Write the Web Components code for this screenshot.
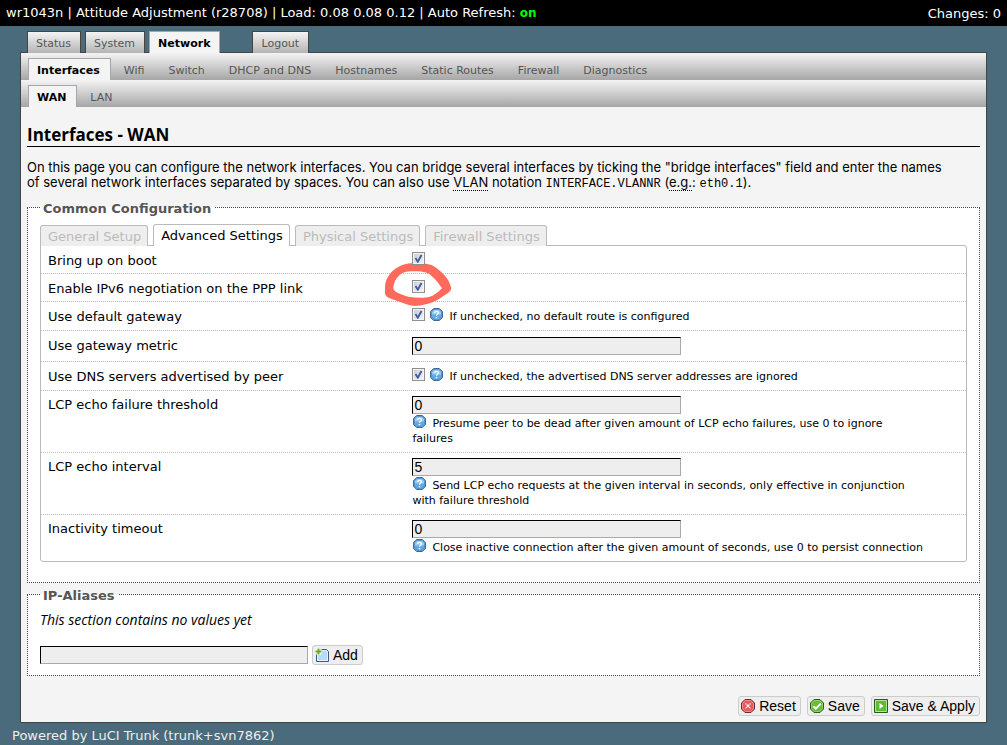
<!DOCTYPE html>
<html lang="en">
<head>
<meta charset="utf-8">
<title>wr1043n - LuCI</title>
<style>
  body { margin: 0; background: #4a6b7c; color: #000; font: 13px/15px "DejaVu Sans", Verdana, sans-serif; }
</style>
</head>
<body>
<luci-app></luci-app>

<script>
const ICONS = {
  help: '<path d="M4 .5h6L13.500 4v6L10 13.500H4L.5 10V4z" fill="#62a9e4" stroke="#35587f"/><path d="M4.400 1.500h5.200l2.900 2.900V7h-11V4.400z" fill="#9accf2"/><path d="M4.400 1.500h5.200l2.900 2.900v5.200l-2.900 2.900H4.400L1.500 9.600V4.400z" fill="none" stroke="#4d92d2"/><path d="M5 5.400C5 3 9.100 3 9.100 5.200c0 1.500-2.100 1.400-2.100 3.100" fill="none" stroke="#fff" stroke-width="1.400"/><path d="M6.200 9.600h1.600v1.500H6.200z" fill="#fff"/>',
  reset: '<path d="M4 .5h6L13.500 4v6L10 13.500H4L.5 10V4z" fill="#e35b5f" stroke="#742a2c"/><path d="M4.400 1.500h5.200l2.900 2.900v5.200l-2.900 2.900H4.400L1.500 9.600V4.400z" fill="none" stroke="#f08b8d"/><path d="M4.500 4.500l5 5m0-5l-5 5" stroke="#fff" stroke-width="1.300" stroke-dasharray="1.200 .5"/>',
  save: '<path d="M4 .5h6L13.500 4v6L10 13.500H4L.5 10V4z" fill="#68bc38" stroke="#2f5b1c"/><path d="M4.400 1.500h5.200l2.900 2.900v5.200l-2.900 2.900H4.400L1.500 9.600V4.400z" fill="none" stroke="#93d467"/><path d="M3.500 7.200l2.400 2.400 4.900-5" fill="none" stroke="#fff" stroke-width="2"/>',
  apply: '<path d="M.5.5h13v13H.5z" fill="#5fbb35" stroke="#255e16"/><path d="M1.500 1.500h11v11h-11z" fill="none" stroke="#b5e598"/><path d="M5.500 4l4 3-4 3z" fill="#fff"/>',
  add: '<path d="M2 1.500h9.500l2 2v10H1.500V2z" fill="#b7dcfb" stroke="#3d5a83"/><path d="M2.500 2.500H11l1.500 1.500v8.500h-10z" fill="none" stroke="#e3f3ff"/><path d="M3.500 0v7M0 3.500h7" stroke="#fff" stroke-width="4"/><path d="M3.500 .5v6M.5 3.500h6" stroke="#69a823" stroke-width="2"/>'
};
const icon = (name, size = 14) => `<svg class="icon" width="${size}" height="${size}" viewBox="0 0 14 14" aria-hidden="true">${ICONS[name]}</svg>`;

const define = (name, render) => customElements.define(name, class extends HTMLElement {
  connectedCallback() {
    if (this.shadowRoot) return;
    this.attachShadow({ mode: 'open' }).innerHTML = render(this);
  }
});

define('status-bar', () => `
  <style>
    :host { display: flex; justify-content: space-between; align-items: center; height: 26px; padding: 0 6px; background: #000; color: #fff; }
  </style>
  <slot></slot><slot name="end"></slot>`);

/* A row of navigation tabs; level "main" sits on the blue page, "sub" is a grey bar. */
define('nav-tabs', el => {
  const active = el.getAttribute('active');
  const links = el.getAttribute('items').split(',').map(t =>
    `<a href="#"${t === active ? ' class="on" aria-current="page"' : ''}${t === 'Logout' ? ' style="margin-left:28px"' : ''}>${t}</a>`).join('');
  return `
  <style>
    :host { display: block; font-size: 11px; }
    nav { display: flex; align-items: flex-end; gap: 4px; }
    a { box-sizing: border-box; height: 22px; padding: 0 10px 0 8px; border: 1px solid transparent; border-bottom: 0; line-height: 23px; color: #555; text-decoration: none; }
    .on { font-weight: bold; color: #000; }
    :host([level=main]) nav { position: relative; z-index: 1; padding: 5px 7px 0; margin-bottom: -1px; }
    :host([level=main]) a { padding: 0 9px 0 8px; border-color: #444; background: linear-gradient(#f4f4f4, #b4b4b4); }
    :host([level=sub]) nav { height: 27px; padding: 0 7px; background: linear-gradient(#f4f4f4, #a6a6a6); }
    nav a.on { border-color: #a6a6a6 !important; background: #f4f4f4 !important; }
  </style>
  <nav>${links}</nav>`;
});

define('config-section', el => `
  <style>
    :host { display: block; }
    fieldset { margin: 0; padding: 0 12px; min-width: 0; border: 1px dotted #444; background: #fff; }
    legend { padding: 3px 3px 0; font-weight: bold; color: #555; }
  </style>
  <fieldset><legend>${el.getAttribute('heading')}</legend><slot></slot></fieldset>`);

define('form-tabs', el => {
  const active = el.getAttribute('active');
  return `
  <style>
    :host { display: block; padding: 8px 0 20px; }
    .tabs { position: relative; display: flex; align-items: flex-end; gap: 5px; margin-bottom: -1px; }
    button { height: 21px; margin: 0; padding: 1px 6px 0 7px; border: 1px solid #bbb; border-bottom: 0; border-radius: 3px 3px 0 0; background: #eee; color: #bbb; font: inherit; line-height: 20px; }
    button.on { height: 22px; background: #fff; color: #000; }
    .pane { border: 1px solid #bbb; border-radius: 0 3px 3px 3px; }
  </style>
  <div class="tabs" role="tablist">${el.getAttribute('items').split(',').map(t =>
    `<button type="button" role="tab" aria-selected="${t === active}"${t === active ? ' class="on"' : ''}>${t}</button>`).join('')}</div>
  <div class="pane"><slot></slot></div>`;
});

/* One option: label on the left, tick box or text box on the right, with an optional hint. */
define('config-row', el => {
  const isText = el.hasAttribute('value');
  const hint = el.getAttribute('hint');
  return `
  <style>
    :host { display: flex; padding: 6px 7px; border-bottom: 1px dotted #bbb; }
    :host([value][hint]) { padding-top: 5px; }
    :host(:last-of-type) { border-bottom: 0; }
    label { flex: 0 0 40%; padding-top: 1px; margin-bottom: -1px; }
    .field { flex: 0 1 512px; min-width: 0; }
    .check { display: flex; gap: 4px; }
    .box { position: relative; display: flex; }
    input[type=checkbox] {
      appearance: none; position: relative; z-index: 2; width: 13px; height: 13px; margin: 0;
      border: 1px solid #8e8f8f; box-shadow: inset 0 0 0 1px #f4f4f4;
      background: url("data:image/svg+xml,%3Csvg xmlns='http://www.w3.org/2000/svg' viewBox='0 0 11 11'%3E%3Cpath d='M2.500 5l2.300 3.700L8.500 2' fill='none' stroke='%23445aa0' stroke-width='1.900'/%3E%3C/svg%3E") center / 11px 11px, linear-gradient(135deg, #c9cdd4, #f4f5f6);
    }
    input[type=text] { display: block; box-sizing: border-box; width: 269px; max-width: 100%; height: 18px; padding: 0 1px; border: 1px solid; border-color: #000 #aaa #aaa #000; background: #eee; color: #000; font: 14px "Liberation Sans", Arial, sans-serif; }
    .hint { font-size: 11px; }
    input + .hint { margin-top: 1px; }
    .icon { vertical-align: -1px; margin: 0 6px 0 1px; }
    .mark { position: absolute; left: -27px; top: -17px; z-index: 1; pointer-events: none; }
  </style>
  <label for="f">${el.getAttribute('label')}</label>
  <div class="field${isText ? '' : ' check'}">
    ${isText ? `<input id="f" type="text" value="${el.getAttribute('value')}">`
      : `<span class="box"><input id="f" type="checkbox" checked>${el.hasAttribute('marked') ? `
        <svg class="mark" width="67" height="43" viewBox="0 0 201 129" aria-hidden="true"><path fill="#ff6a5c" fill-rule="evenodd" d="M0 72C1 52 10 37 22 25 40 8 60 0 91 0c28 0 47 3 59 12 20 14 36 31 42 44l7 19c-2 12-14 18-25 25-16 12-39 26-85 29-20-1-38-10-58-17C12 106 3 101 0 93zM25 75c1 14 25 20 49 27 20 3 45 3 58 0 15-4 24-12 39-26-8-12-16-24-29-35-11-12-25-16-50-16-27-1-40 3-51 14-10 10-15 21-16 36z"/></svg>` : ''}</span>`}
    ${hint ? `<div class="hint">${icon('help', 13)}${hint}</div>` : ''}
  </div>`;
});

define('icon-button', el => `
  <style>
    :host { display: inline-flex; }
    button { display: flex; align-items: center; gap: 4px; box-sizing: border-box; height: 20px; margin: 0; padding: 0 4px 0 2px; border: 1px solid #ccc; border-radius: 3px; background: #eee; color: #000; font: 14px/18px "Liberation Sans", Arial, sans-serif; white-space: nowrap; }
  </style>
  <button type="button">${icon(el.getAttribute('icon'))}<slot></slot></button>`);

define('alias-form', () => `
  <style>
    :host { display: block; padding: 9px 0 10px; }
    em { display: block; margin-bottom: 18px; font: italic 14px/15px "Open Sans", Verdana, sans-serif; }
    .add { display: flex; align-items: center; gap: 4px; }
    input { box-sizing: border-box; width: 268px; height: 18px; margin: 0; border: 1px solid; border-color: #000 #aaa #aaa #000; background: #eee; }
  </style>
  <em>This section contains no values yet</em>
  <div class="add"><input type="text" aria-label="New alias name"><icon-button icon="add">Add</icon-button></div>`);

define('luci-app', () => `
  <style>
    :host { display: block; }
    b { color: #0f0; font-size: 12px; }
    .shell { margin: 0 20px; }
    main { border: 1px solid #444; background: #f4f4f4; }
    .content { padding: 18px 6px 6px; }
    h2 { margin: 0; padding-bottom: 2px; border-bottom: 1px solid #000; font: 700 17px/19px "Open Sans", "Trebuchet MS", sans-serif; }
    p { margin: 13px 0 7px; padding-right: 24px; font-family: Inter, Verdana, sans-serif; }
    abbr { text-decoration: none; border-bottom: 1px dotted #000; }
    code { font: 12px/14px "Liberation Mono", "Courier New", monospace; }
    config-section + config-section { margin-top: 2px; }
    .actions { display: flex; justify-content: flex-end; gap: 6px; margin-top: 20px; }
    footer { padding: 5px 12px; }
    footer a { color: #eee; text-decoration: none; }
  </style>
  <status-bar><span>wr1043n | Attitude Adjustment (r28708) | Load: 0.08 0.08 0.12 | Auto Refresh: <b>on</b></span><span slot="end">Changes: 0</span></status-bar>
  <div class="shell">
    <nav-tabs level="main" items="Status,System,Network,Logout" active="Network"></nav-tabs>
    <main>
      <nav-tabs level="sub" items="Interfaces,Wifi,Switch,DHCP and DNS,Hostnames,Static Routes,Firewall,Diagnostics" active="Interfaces"></nav-tabs>
      <nav-tabs level="sub" items="WAN,LAN" active="WAN"></nav-tabs>
      <div class="content">
        <h2>Interfaces - WAN</h2>
        <p>On this page you can configure the network interfaces. You can bridge several interfaces by ticking the "bridge interfaces" field and enter the names of several network interfaces separated by spaces. You can also use <abbr title="Virtual Local Area Network">VLAN</abbr> notation <code>INTERFACE.VLANNR</code> (<abbr title="for example">e.g.</abbr>: <code>eth0.1</code>).</p>
        <config-section heading="Common Configuration">
          <form-tabs items="General Setup,Advanced Settings,Physical Settings,Firewall Settings" active="Advanced Settings">
            <config-row label="Bring up on boot"></config-row>
            <config-row label="Enable IPv6 negotiation on the PPP link" marked></config-row>
            <config-row label="Use default gateway" hint="If unchecked, no default route is configured"></config-row>
            <config-row label="Use gateway metric" value="0"></config-row>
            <config-row label="Use DNS servers advertised by peer" hint="If unchecked, the advertised DNS server addresses are ignored"></config-row>
            <config-row label="LCP echo failure threshold" value="0" hint="Presume peer to be dead after given amount of LCP echo failures, use 0 to ignore failures"></config-row>
            <config-row label="LCP echo interval" value="5" hint="Send LCP echo requests at the given interval in seconds, only effective in conjunction with failure threshold"></config-row>
            <config-row label="Inactivity timeout" value="0" hint="Close inactive connection after the given amount of seconds, use 0 to persist connection"></config-row>
          </form-tabs>
        </config-section>
        <config-section heading="IP-Aliases"><alias-form></alias-form></config-section>
        <div class="actions">
          <icon-button icon="reset">Reset</icon-button>
          <icon-button icon="save">Save</icon-button>
          <icon-button icon="apply">Save &amp; Apply</icon-button>
        </div>
      </div>
    </main>
  </div>
  <footer><a href="#">Powered by LuCI Trunk (trunk+svn7862)</a></footer>`);
</script>
</body>
</html>
